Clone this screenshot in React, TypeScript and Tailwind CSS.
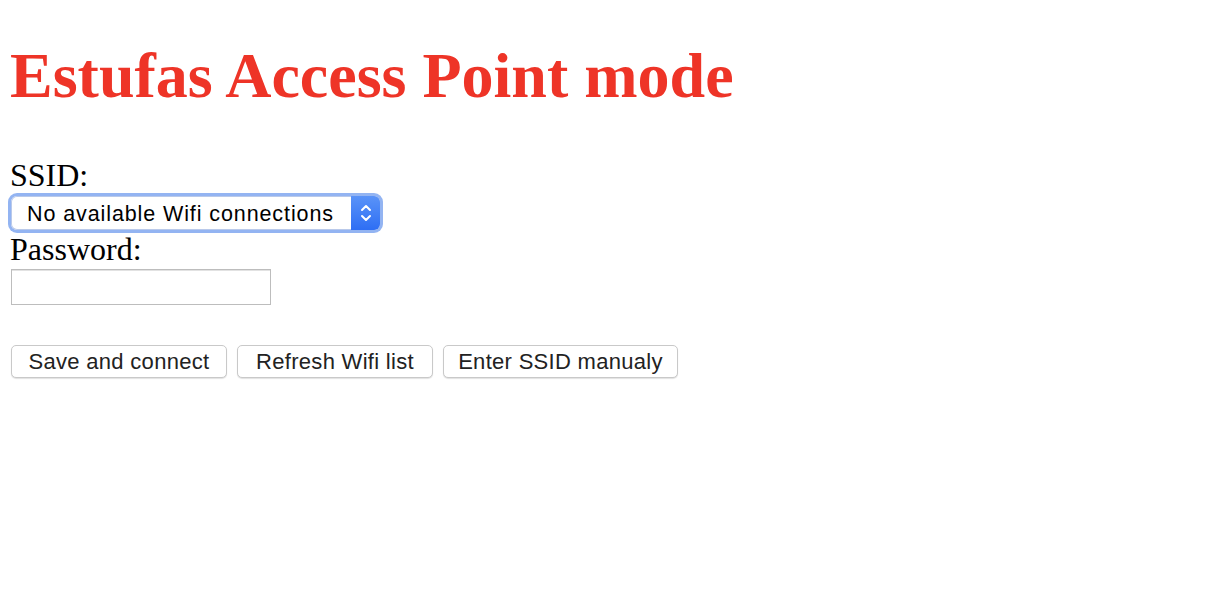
import React from "react";

export default function App() {
  const sans = "font-['Liberation_Sans',Arial,sans-serif]";
  return (
    <div className="min-h-[600px] w-[1232px] bg-white pl-[10px] font-['Liberation_Serif','Times_New_Roman',serif] text-black">
      <h1 className="pt-[44px] text-[64px] font-bold leading-[64px] text-[#ee3427]">
        Estufas Access Point mode
      </h1>
      <div className="mt-[51px] text-[32px] leading-[32px]">SSID:</div>
      <div className="mt-[2px] ml-[-2px] h-[40px] w-[375px] rounded-[9px] bg-[#93b4f2] p-[3px]">
        <div className="flex h-[34px] w-[369px] items-stretch overflow-hidden rounded-[6px] bg-white shadow-[inset_0_0_0_1px_#b9c9ea]">
          <div className={`flex flex-1 items-center pl-[16px] pt-[3px] text-[21.5px] tracking-[0.9px] ${sans}`}>
            No available Wifi connections
          </div>
          <div className="flex w-[29px] items-center justify-center bg-gradient-to-b from-[#5a93f8] to-[#2e6ef4]">
            <svg width="14" height="22" viewBox="0 0 14 22" fill="none" stroke="white" strokeWidth="2" strokeLinecap="round" strokeLinejoin="round">
              <path d="M3 8 L7 4 L11 8" />
              <path d="M3 14 L7 18 L11 14" />
            </svg>
          </div>
        </div>
      </div>
      <div className="mt-[0px] text-[32px] leading-[32px]">Password:</div>
      <div className="mt-[4px] ml-[1px] h-[36px] w-[260px] border border-[#bdbdbd] bg-white shadow-[inset_0_1px_0_#e2e2e2]" />
      <div className={`mt-[40px] ml-[1px] flex gap-[10px] ${sans}`}>
        {[
          ["Save and connect", "w-[216px]"],
          ["Refresh Wifi list", "w-[196px]"],
          ["Enter SSID manualy", "w-[235px]"],
        ].map(([t, w]) => (
          <div
            key={t}
            className={`flex h-[33px] ${w} items-center justify-center rounded-[5px] border border-[#c9c9c9] bg-white text-[22px] tracking-[0.3px] text-[#222] shadow-[0_1px_1px_rgba(0,0,0,0.12)]`}
          >
            {t}
          </div>
        ))}
      </div>
    </div>
  );
}
